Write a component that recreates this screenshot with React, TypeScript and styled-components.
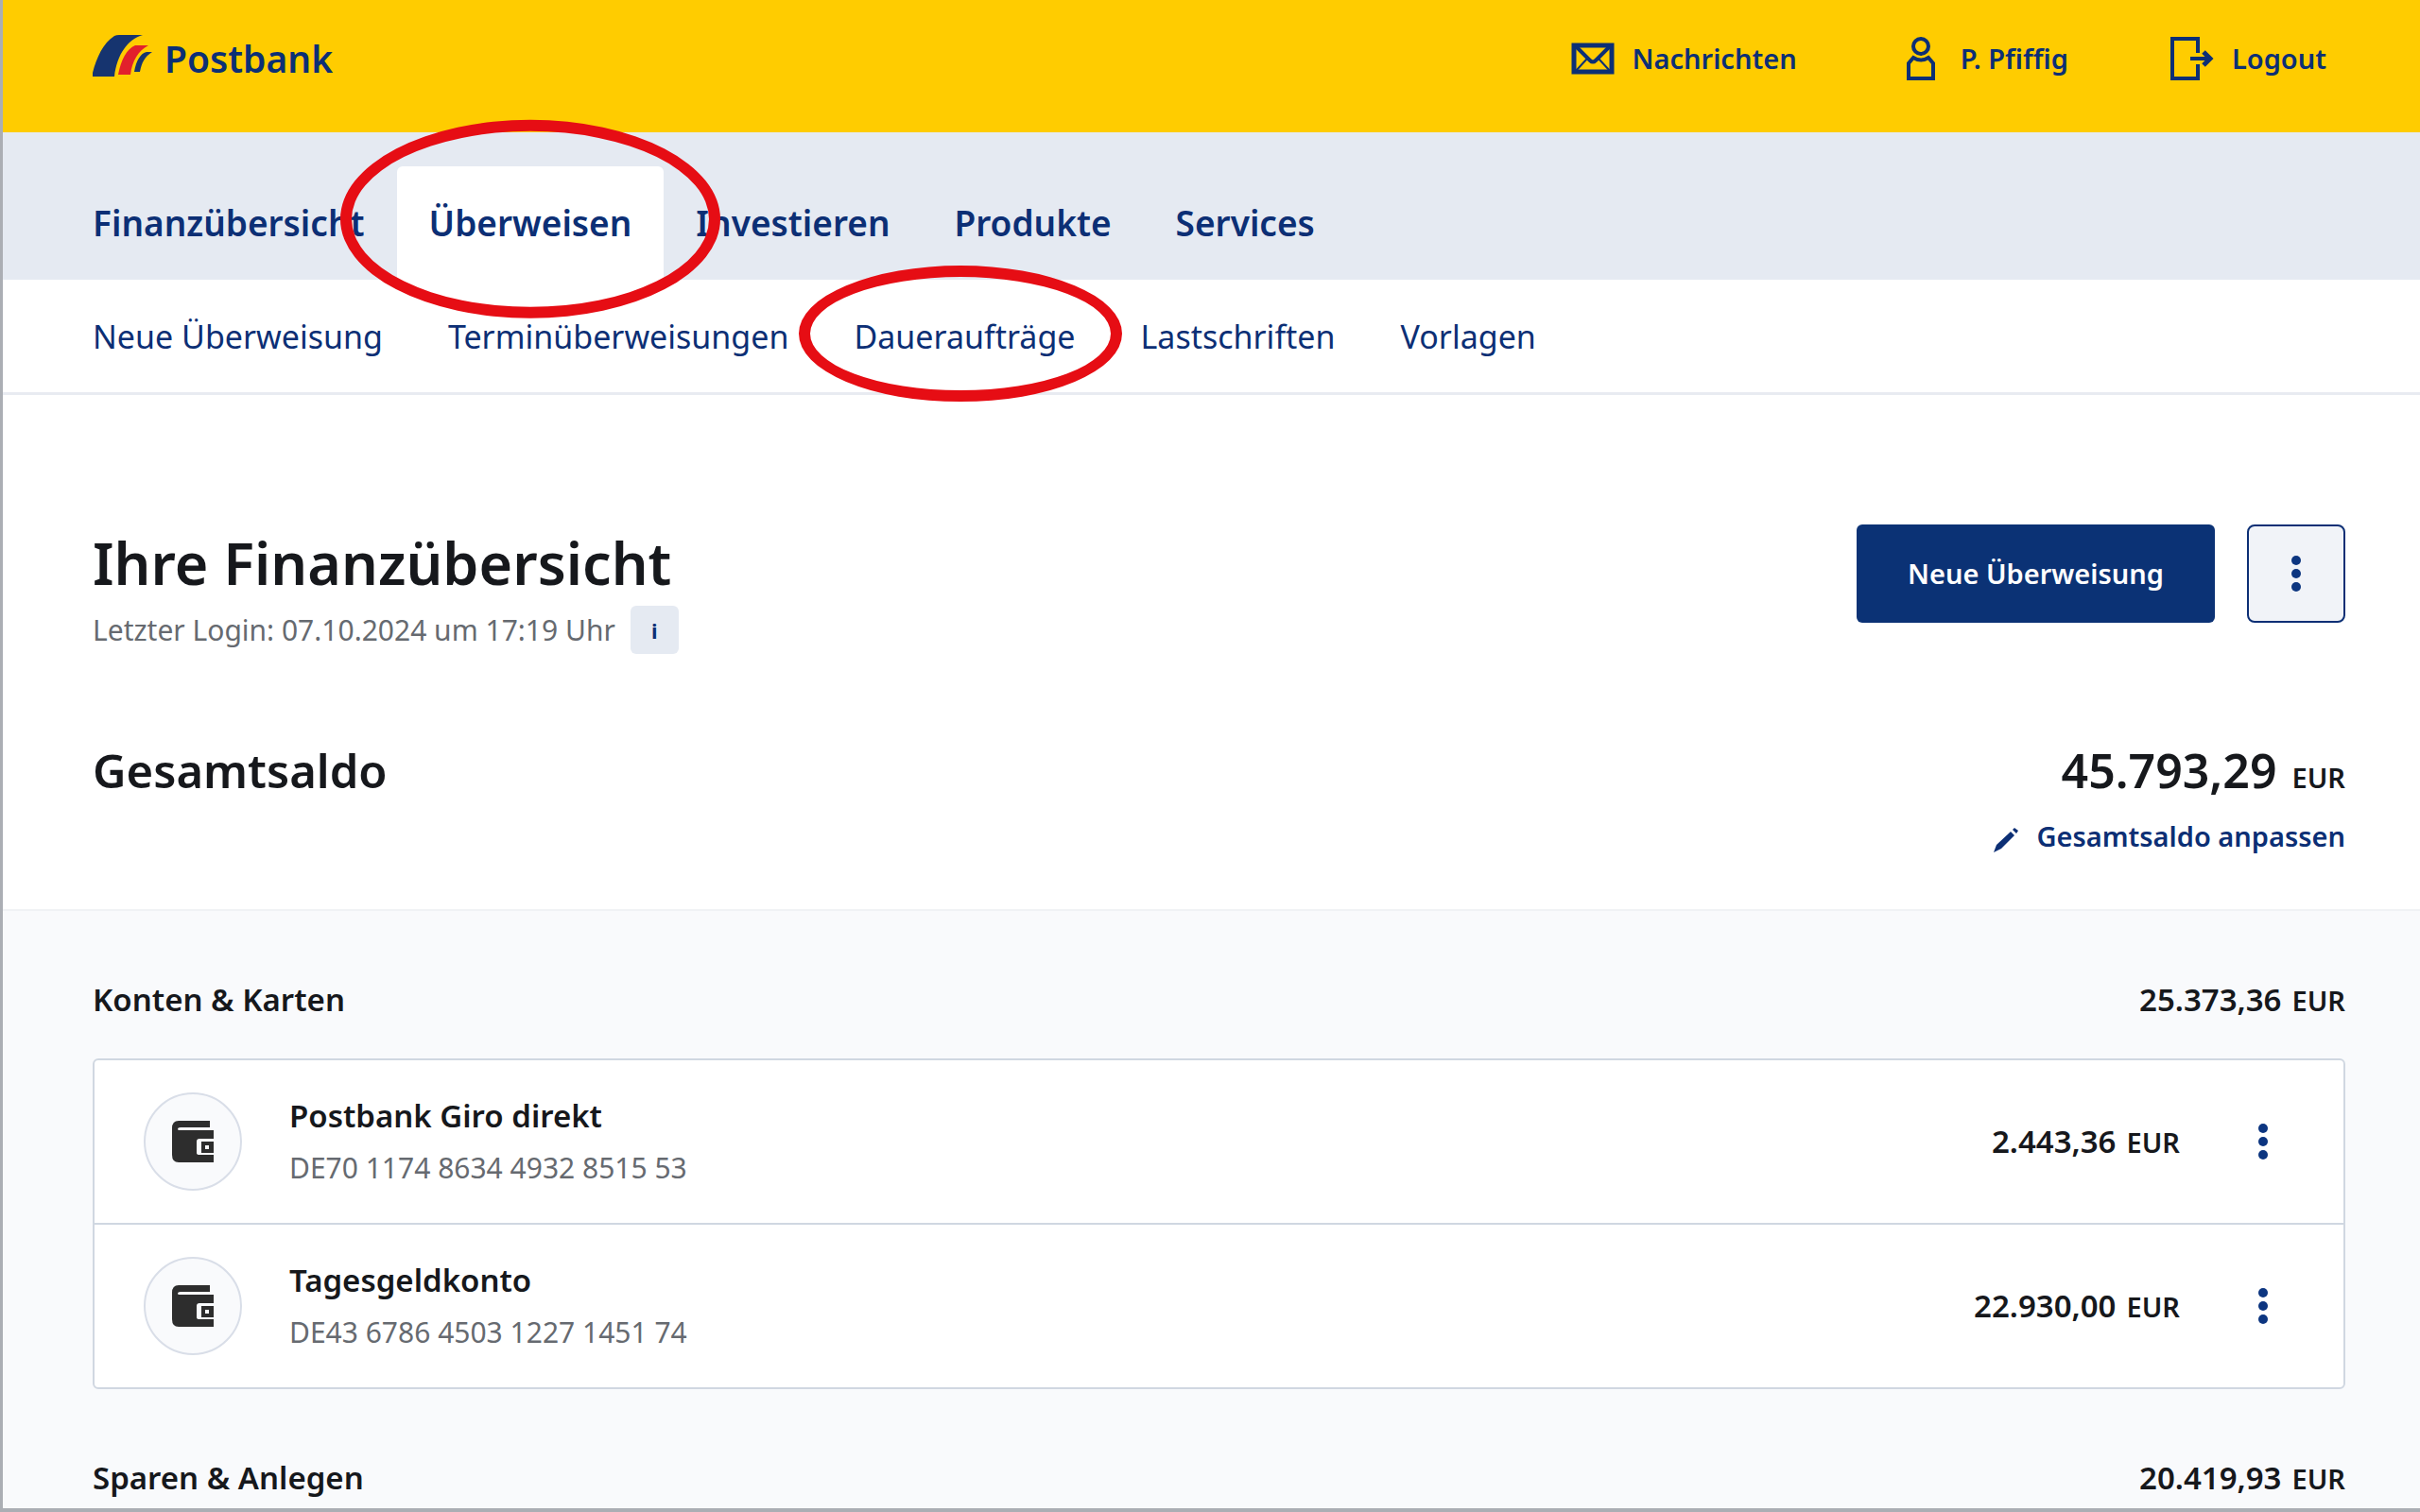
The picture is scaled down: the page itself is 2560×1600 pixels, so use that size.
import React from "react";
import styled, { createGlobalStyle, css } from "styled-components";

const color = {
  yellow: "#ffcc00",
  navy: "#0c2f75",
  button: "#0b3275",
  ink: "#16181c",
  muted: "#666a70",
  bar: "#e5eaf2",
  line: "#d0d7e1",
  panel: "#f9fafc",
  frame: "#abaeb4",
  mark: "#e60d14",
};

const GlobalStyle = createGlobalStyle`
  *, *::before, *::after { box-sizing: border-box; }
  body {
    margin: 0;
    background: #fff;
    color: ${color.ink};
    font-family: "Noto Sans", "Open Sans", sans-serif;
    font-size: 30px;
    line-height: 44px;
  }
  h1, h2, h3, p, ul { margin: 0; padding: 0; }
  ul { list-style: none; }
  a { color: inherit; text-decoration: none; }
  button { font: inherit; cursor: pointer; }
  svg { display: block; flex: none; }
`;

const Frame = styled.div`
  display: flex;
  flex-direction: column;
  min-height: 100vh;
  border-left: 3px solid ${color.frame};
  border-bottom: 4px solid ${color.frame};
`;

const gutter = css`
  padding-left: 95px;
  padding-right: 79px;
`;

const Header = styled.header`
  ${gutter}
  display: flex;
  align-items: center;
  justify-content: space-between;
  height: 140px;
  padding-bottom: 16px;
  background: ${color.yellow};
  color: ${color.navy};
`;

const Brand = styled.a`
  display: flex;
  align-items: center;
  gap: 12px;
  font-size: 39px;
  font-weight: 600;
`;

const HeaderLinks = styled.nav`
  display: flex;
  gap: 108px;
  padding-right: 20px;
`;

const HeaderLink = styled.a`
  display: flex;
  align-items: center;
  gap: 19px;
  font-size: 29px;
  font-weight: 600;
`;

const MainNav = styled.nav`
  ${gutter}
  height: 156px;
  padding-top: 36px;
  background: ${color.bar};
  color: ${color.navy};
`;

const MainList = styled.ul`
  display: flex;
  height: 100%;
  margin-left: -34px;
`;

const MainItem = styled.li`
  position: relative;
  display: flex;
`;

const MainLink = styled.a<{ $active?: boolean }>`
  display: flex;
  align-items: center;
  padding: 0 34px;
  border-radius: 6px 6px 0 0;
  background: ${(p) => (p.$active ? "#fff" : "transparent")};
  font-size: 37px;
  font-weight: 600;
`;

const SubNav = styled.nav`
  ${gutter}
  border-bottom: 3px solid #e8ebf1;
  color: ${color.navy};
`;

const SubList = styled.ul`
  display: flex;
  gap: 69px;
  padding: 38px 0 37px;
`;

const SubItem = styled.li`
  position: relative;
  font-size: 34px;
`;

const Ring = styled.span<{ $width: number; $height: number; $left: number }>`
  position: absolute;
  z-index: 1;
  top: 50%;
  left: ${(p) => p.$left}%;
  width: ${(p) => p.$width}px;
  height: ${(p) => p.$height}px;
  border: 12px solid ${color.mark};
  border-radius: 50%;
  transform: translate(-50%, -52%);
  pointer-events: none;
`;

const Overview = styled.section`
  ${gutter}
  padding-top: 137px;
  padding-bottom: 55px;
`;

const Split = styled.div`
  display: flex;
  align-items: flex-start;
  justify-content: space-between;
`;

const Title = styled.h1`
  margin-bottom: 4px;
  font-size: 61px;
  font-weight: 600;
  line-height: 82px;
`;

const LastLogin = styled.div`
  display: flex;
  align-items: center;
  gap: 16px;
  color: ${color.muted};
  font-size: 30px;
`;

const InfoButton = styled.button`
  width: 51px;
  height: 51px;
  padding: 0;
  border: 0;
  border-radius: 6px;
  background: ${color.bar};
  color: ${color.navy};
  font-size: 22px;
  font-weight: 700;
`;

const Actions = styled.div`
  display: flex;
  gap: 34px;
`;

const PrimaryButton = styled.button`
  height: 104px;
  padding: 0 54px;
  border: 0;
  border-radius: 6px;
  background: ${color.button};
  color: #fff;
  font-size: 29px;
  font-weight: 600;
`;

const MoreButton = styled.button<{ $outlined?: boolean }>`
  display: flex;
  align-items: center;
  justify-content: center;
  width: 104px;
  height: 104px;
  padding: 0;
  border: ${(p) => (p.$outlined ? `2px solid ${color.navy}` : "0")};
  border-radius: 8px;
  background: ${(p) => (p.$outlined ? "#f1f3f8" : "transparent")};
`;

const Total = styled.div`
  display: flex;
  justify-content: space-between;
  align-items: baseline;
  height: 64px;
  margin-top: 91px;
  font-size: 49px;
  font-weight: 600;
  line-height: 64px;
`;

const TotalTitle = styled.h2`
  font: inherit;
`;

const TotalValue = styled.span`
  font-size: 50px;
`;

const Currency = styled.span<{ $gap: number }>`
  margin-left: ${(p) => p.$gap}px;
  font-size: 29px;
  font-weight: 600;
  line-height: 1;
`;

const AdjustLink = styled.a`
  display: flex;
  align-items: center;
  justify-content: flex-end;
  gap: 18px;
  margin-top: 16px;
  color: ${color.navy};
  font-size: 29px;
  font-weight: 600;
`;

const Accounts = styled.main`
  ${gutter}
  flex: 1;
  padding-top: 72px;
  padding-bottom: 8px;
  border-top: 2px solid #f0f2f5;
  background: ${color.panel};
`;

const GroupHeader = styled.div`
  display: flex;
  justify-content: space-between;
  align-items: baseline;
  height: 44px;
`;

const GroupTitle = styled.h3`
  font-size: 33px;
  font-weight: 600;
`;

const Amount = styled.span`
  font-size: 33px;
  font-weight: 600;
`;

const Card = styled.ul`
  margin: 40px 0 72px;
  border: 2px solid ${color.line};
  border-radius: 6px;
  background: #fff;
`;

const AccountRow = styled.li`
  display: flex;
  align-items: center;
  height: 172px;
  padding: 0 33px 0 52px;

  & + & {
    height: 174px;
    border-top: 2px solid ${color.line};
  }
`;

const Avatar = styled.span`
  display: flex;
  align-items: center;
  justify-content: center;
  width: 104px;
  height: 104px;
  margin-right: 50px;
  border: 2px solid #d9dee8;
  border-radius: 50%;
  background: ${color.panel};
`;

const AccountText = styled.a`
  display: flex;
  flex: 1;
  flex-direction: column;
  gap: 11px;
`;

const AccountName = styled.span`
  font-size: 33px;
  font-weight: 600;
`;

const Iban = styled.span`
  color: ${color.muted};
  font-size: 30px;
`;

const RowEnd = styled.div`
  display: flex;
  align-items: center;
  gap: 36px;
`;

const LogoMark = () => (
  <svg width="64" height="52" viewBox="1 0 64 52" aria-hidden="true">
    <path d="M0 45C4 28 11 10 24 2Q26 1 29 1H54C38 6 27 21 24 45Z" fill="#16346f" />
    <path d="M28 43C31 27 37 16 46 12H60C49 18 43 28 41 43Z" fill="#e2202c" />
    <path d="M45 40C47 28 52 20 58 19H64C56 24 53 30 51 40Z" fill="#16346f" />
  </svg>
);

const MailIcon = () => (
  <svg width="46" height="46" viewBox="0 0 46 46" fill="none" stroke="#0c2f75" aria-hidden="true">
    <rect x="3" y="9" width="40" height="28" strokeWidth="5" />
    <path d="M5 10l15 15q3 3 6 0l15-15" strokeWidth="4" />
    <path d="M5 36l12-13M41 36l-12-13" strokeWidth="2" />
  </svg>
);

const PersonIcon = () => (
  <svg width="46" height="46" viewBox="0 0 46 46" fill="none" stroke="#0c2f75" strokeWidth="4" aria-hidden="true">
    <circle cx="23" cy="10" r="8" />
    <path d="M10 44V28L15 22Q23 27 31 22L36 28V44Z" />
  </svg>
);

const LogoutIcon = () => (
  <svg width="46" height="46" viewBox="0 0 46 46" fill="none" stroke="#0c2f75" strokeWidth="4" aria-hidden="true">
    <path d="M29 17V2H2V44H29V29" />
    <path d="M21 23H41" />
    <path d="M35 16L42 23L35 30" strokeWidth="5" />
  </svg>
);

const DotsIcon = () => (
  <svg width="10" height="40" viewBox="0 0 10 40" fill="#0c3580" aria-hidden="true">
    <circle cx="5" cy="6" r="5" />
    <circle cx="5" cy="20" r="5" />
    <circle cx="5" cy="34" r="5" />
  </svg>
);

const PencilIcon = () => (
  <svg width="28" height="36" viewBox="0 0 28 36" fill="#0c2f75" aria-hidden="true">
    <path d="M1 35L4 27L19 13L23 17L9 31Z" />
    <path d="M21 11L23 9L27 12L25 15Z" />
  </svg>
);

const WalletIcon = () => (
  <svg width="44" height="44" viewBox="0 0 44 44" aria-hidden="true">
    <path
      d="M7 0H40V7H9Q6 7 6 9Q6 10 8 10H44V19H29Q26 19 26 22V34Q26 36 29 36H44V44H7Q0 44 0 36V8Q0 0 7 0Z"
      fill="#2d2d2d"
    />
    <path d="M31 22H44V34H31Z M35 26V30H39V26Z" fill="#2d2d2d" fillRule="evenodd" />
  </svg>
);

const headerLinks = [
  { label: "Nachrichten", Icon: MailIcon },
  { label: "P. Pfiffig", Icon: PersonIcon },
  { label: "Logout", Icon: LogoutIcon },
];

const mainLinks = ["Finanzübersicht", "Überweisen", "Investieren", "Produkte", "Services"];

const subLinks = ["Neue Überweisung", "Terminüberweisungen", "Daueraufträge", "Lastschriften", "Vorlagen"];

const accounts = [
  { name: "Postbank Giro direkt", iban: "DE70 1174 8634 4932 8515 53", amount: "2.443,36" },
  { name: "Tagesgeldkonto", iban: "DE43 6786 4503 1227 1451 74", amount: "22.930,00" },
];

const Money = ({ value }: { value: string }) => (
  <Amount>
    {value}
    <Currency $gap={11}>EUR</Currency>
  </Amount>
);

export default function App() {
  return (
    <>
      <GlobalStyle />
      <Frame>
        <Header>
          <Brand href="#">
            <LogoMark />
            Postbank
          </Brand>
          <HeaderLinks>
            {headerLinks.map(({ label, Icon }) => (
              <HeaderLink href="#" key={label}>
                <Icon />
                {label}
              </HeaderLink>
            ))}
          </HeaderLinks>
        </Header>

        <MainNav>
          <MainList>
            {mainLinks.map((label) => (
              <MainItem key={label}>
                <MainLink href="#" $active={label === "Überweisen"}>
                  {label}
                </MainLink>
                {label === "Überweisen" && <Ring $width={402} $height={210} $left={50} />}
              </MainItem>
            ))}
          </MainList>
        </MainNav>

        <SubNav>
          <SubList>
            {subLinks.map((label) => (
              <SubItem key={label}>
                <a href="#">{label}</a>
                {label === "Daueraufträge" && <Ring $width={342} $height={144} $left={48} />}
              </SubItem>
            ))}
          </SubList>
        </SubNav>

        <Overview>
          <Split>
            <div>
              <Title>Ihre Finanzübersicht</Title>
              <LastLogin>
                <span>Letzter Login: 07.10.2024 um 17:19 Uhr</span>
                <InfoButton type="button">i</InfoButton>
              </LastLogin>
            </div>
            <Actions>
              <PrimaryButton type="button">Neue Überweisung</PrimaryButton>
              <MoreButton type="button" aria-label="Weitere Aktionen" $outlined>
                <DotsIcon />
              </MoreButton>
            </Actions>
          </Split>
          <Total>
            <TotalTitle>Gesamtsaldo</TotalTitle>
            <TotalValue>
              45.793,29
              <Currency $gap={16}>EUR</Currency>
            </TotalValue>
          </Total>
          <AdjustLink href="#">
            <PencilIcon />
            Gesamtsaldo anpassen
          </AdjustLink>
        </Overview>

        <Accounts>
          <GroupHeader>
            <GroupTitle>Konten &amp; Karten</GroupTitle>
            <Money value="25.373,36" />
          </GroupHeader>
          <Card>
            {accounts.map((account) => (
              <AccountRow key={account.iban}>
                <Avatar>
                  <WalletIcon />
                </Avatar>
                <AccountText href="#">
                  <AccountName>{account.name}</AccountName>
                  <Iban>{account.iban}</Iban>
                </AccountText>
                <RowEnd>
                  <Money value={account.amount} />
                  <MoreButton type="button" aria-label="Weitere Aktionen">
                    <DotsIcon />
                  </MoreButton>
                </RowEnd>
              </AccountRow>
            ))}
          </Card>
          <GroupHeader>
            <GroupTitle>Sparen &amp; Anlegen</GroupTitle>
            <Money value="20.419,93" />
          </GroupHeader>
        </Accounts>
      </Frame>
    </>
  );
}
